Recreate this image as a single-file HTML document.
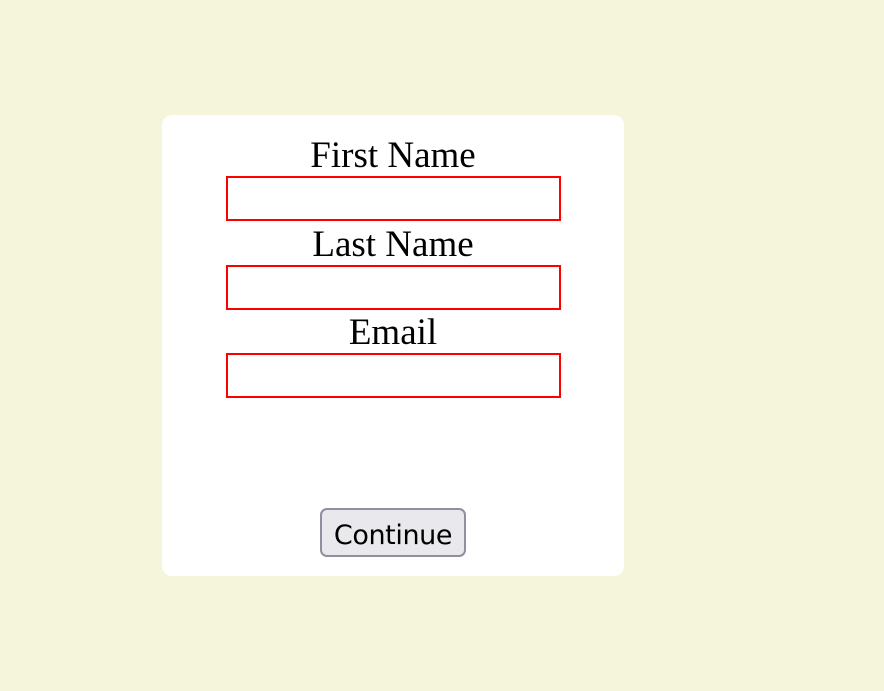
<!DOCTYPE html>
<html><head><style>
html,body{margin:0;padding:0;width:884px;height:691px;background:#f5f5dc;overflow:hidden}
.card{position:absolute;left:162px;top:115px;width:462px;height:461px;background:#fff;border-radius:10px}
.lbl{position:absolute;left:0;width:100%;text-align:center;font-family:"Liberation Serif",serif;font-size:37px;line-height:44px;color:#000}
.in{position:absolute;left:64px;width:331px;height:41px;border:2px solid red;background:#fff}
.btn{position:absolute;left:158px;top:393px;width:146px;height:49px;box-sizing:border-box;background:#e9e9ed;border:2px solid #8f8f9d;border-radius:7px;font-family:"DejaVu Sans",sans-serif;font-size:27px;line-height:51px;text-align:center;color:#000;letter-spacing:-0.4px}
</style></head><body>
<div class="card">
<div class="lbl" style="top:19px">First Name</div>
<div class="in" style="top:61px"></div>
<div class="lbl" style="top:108px">Last Name</div>
<div class="in" style="top:150px"></div>
<div class="lbl" style="top:196px">Email</div>
<div class="in" style="top:238px"></div>
<div class="btn">Continue</div>
</div>
</body></html>
